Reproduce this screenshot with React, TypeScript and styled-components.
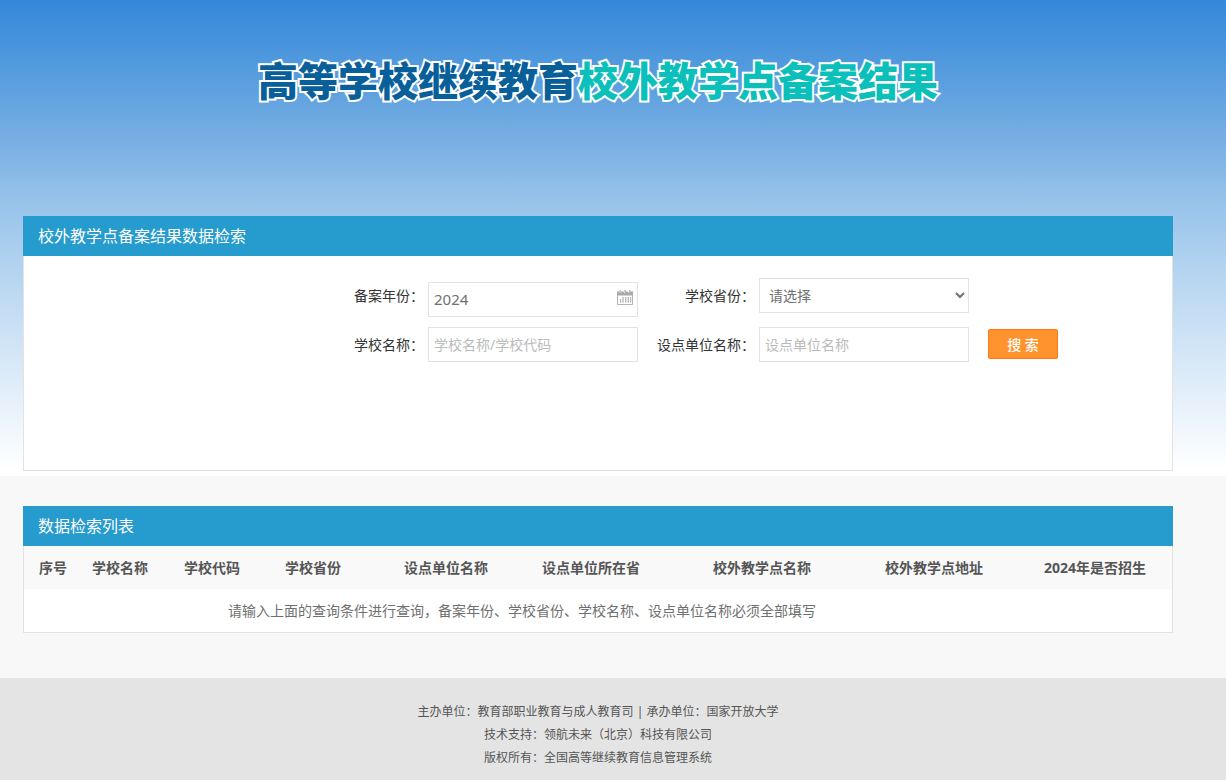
import React from "react";
import styled, { createGlobalStyle } from "styled-components";

const GlobalStyle = createGlobalStyle`
  * {
    box-sizing: border-box;
  }
  body {
    margin: 0;
    background: #f8f8f8;
    color: #333;
    font-family: "Noto Sans", "Noto Sans CJK SC", sans-serif;
    font-size: 14px;
  }
  input, select, button {
    font-family: inherit;
  }
`;

const Hero = styled.header`
  height: 476px;
  padding-right: 30px;
  background: linear-gradient(#3488da 0, #4693dc 40px, #6da9e1 120px, #96c2ea 200px, #b8d6f1 280px, #fff 470px);
`;

const Container = styled.div`
  max-width: 1150px;
  margin: 0 auto;
`;

const Title = styled.h1`
  height: 216px;
  margin: 0;
  padding-top: 50px;
  font-family: "Noto Sans CJK SC", sans-serif;
  font-size: 40px;
  font-weight: 900;
  line-height: 58px;
  text-align: center;
  color: #085f99;
  -webkit-text-stroke: 4px #fff;
  paint-order: stroke fill;
  stroke-linejoin: round;
`;

const TitleAccent = styled.span`
  color: #0bbfba;
`;

const PanelTitle = styled.h2`
  margin: 0;
  padding-left: 15px;
  background: #269bce;
  color: #fff;
  font-size: 16px;
  font-weight: 400;
  line-height: 40px;
`;

const PanelBody = styled.div<{ $height?: number }>`
  min-height: ${(p) => (p.$height ? `${p.$height}px` : "0")};
  background: #fff;
  border: 1px solid #e3e3e3;
  border-top: 0;
`;

const SearchForm = styled.form`
  display: grid;
  grid-template-columns: 70px 210px 113px 210px 70px;
  column-gap: 4px;
  row-gap: 10px;
  align-items: start;
  padding: 22px 0 0 330px;
`;

const Label = styled.label`
  line-height: 35px;
  text-align: right;
  white-space: nowrap;
`;

const Field = styled.input`
  width: 100%;
  height: 35px;
  padding: 0 5px;
  border: 1px solid #e3e3e3;
  background: #fff;
  color: #707070;
  font-size: 14px;
  &::placeholder {
    color: #bbb;
    opacity: 1;
  }
`;

const DateBox = styled.div`
  position: relative;
  padding-top: 4px;
`;

const DateField = styled(Field)`
  display: block;
  padding: 0 26px 2px 5px;
  font-size: 15px;
`;

const CalendarIcon = styled.svg`
  position: absolute;
  top: 12px;
  right: 5px;
`;

const Select = styled.select`
  width: 100%;
  height: 35px;
  padding: 0 5px;
  border: 1px solid #e3e3e3;
  border-radius: 0;
  background: #fff;
  color: #707070;
  font-size: 14px;
`;

const SearchButton = styled.button`
  grid-column: 5;
  width: 70px;
  height: 30px;
  margin: 2px 0 0 15px;
  padding: 2px 0 0;
  border: 1px solid #fb7818;
  border-radius: 2px;
  background: #ff942f;
  color: #fff;
  font-size: 14px;
  font-weight: 500;
  line-height: 26px;
`;

const ListSection = styled.main`
  padding: 30px 30px 45px 0;
`;

const Table = styled.table`
  width: 100%;
  table-layout: fixed;
  border-collapse: collapse;
  color: #555;
`;

const HeadCell = styled.th<{ $width: number }>`
  width: ${(p) => p.$width}px;
  height: 43px;
  padding: 0 0 0 15px;
  background: #f9f9f9;
  line-height: 20px;
  text-align: left;
  white-space: nowrap;
`;

const MessageCell = styled.td`
  height: 43px;
  padding: 0 0 0 204px;
  color: #707070;
  line-height: 20px;
`;

const Footer = styled.footer`
  padding: 22px 30px 11px 0;
  background: #e4e4e4;
  color: #555;
  font-size: 12px;
  text-align: center;
`;

const FooterLine = styled.p`
  margin: 0;
  line-height: 23px;
`;

const columns = [
  { name: "序号", width: 53 },
  { name: "学校名称", width: 92 },
  { name: "学校代码", width: 101 },
  { name: "学校省份", width: 119 },
  { name: "设点单位名称", width: 138 },
  { name: "设点单位所在省", width: 171 },
  { name: "校外教学点名称", width: 172 },
  { name: "校外教学点地址", width: 159 },
  { name: "2024年是否招生", width: 143 },
];

const footerLines = [
  "主办单位：教育部职业教育与成人教育司 | 承办单位：国家开放大学",
  "技术支持：领航未来（北京）科技有限公司",
  "版权所有：全国高等继续教育信息管理系统",
];

function Calendar() {
  return (
    <CalendarIcon width="16" height="16" viewBox="0 0 16 16" aria-hidden="true">
      <path fill="#aaa" d="M0 1.500h2.200l.8 1.500 1-1.500h2.500l1 1.500 1-1.500h2.500l1 1.500 1-1.500H16V5.500H0z" />
      <path fill="#aaa" d="M2.500 0h1.200v2H2.500zM7.400 0h1.200v2H7.400zM12.300 0h1.200v2h-1.200z" />
      <path fill="none" stroke="#b4b4b4" d="M.5 5v9.500h15V5" />
      <path fill="#b0b0b0" d="M3 9h1.200v3.500H3zM5.300 7h1.400v5.500H5.300zM8 7h1.400v5.500H8zM10.600 7H12v5.500h-1.400zM13 7h1.200v5.500H13z" />
      <path stroke="#fff" strokeOpacity=".5" strokeWidth=".6" d="M2 8.700h12M2 10.700h12" />
    </CalendarIcon>
  );
}

export default function App() {
  return (
    <>
      <GlobalStyle />
      <Hero>
        <Container>
          <Title>
            高等学校继续教育<TitleAccent>校外教学点备案结果</TitleAccent>
          </Title>
          <PanelTitle>校外教学点备案结果数据检索</PanelTitle>
          <PanelBody $height={215}>
            <SearchForm onSubmit={(e) => e.preventDefault()}>
              <Label htmlFor="year">备案年份：</Label>
              <DateBox>
                <DateField id="year" type="text" defaultValue="2024" />
                <Calendar />
              </DateBox>
              <Label htmlFor="province">学校省份：</Label>
              <Select id="province">
                <option>请选择</option>
              </Select>
              <span />
              <Label htmlFor="school">学校名称：</Label>
              <Field id="school" type="text" placeholder="学校名称/学校代码" />
              <Label htmlFor="unit">设点单位名称：</Label>
              <Field id="unit" type="text" placeholder="设点单位名称" />
              <SearchButton type="submit">搜 索</SearchButton>
            </SearchForm>
          </PanelBody>
        </Container>
      </Hero>
      <ListSection>
        <Container>
          <PanelTitle>数据检索列表</PanelTitle>
          <PanelBody>
            <Table>
              <thead>
                <tr>
                  {columns.map((c) => (
                    <HeadCell key={c.name} $width={c.width} scope="col">
                      {c.name}
                    </HeadCell>
                  ))}
                </tr>
              </thead>
              <tbody>
                <tr>
                  <MessageCell colSpan={columns.length}>
                    请输入上面的查询条件进行查询，备案年份、学校省份、学校名称、设点单位名称必须全部填写
                  </MessageCell>
                </tr>
              </tbody>
            </Table>
          </PanelBody>
        </Container>
      </ListSection>
      <Footer>
        {footerLines.map((line) => (
          <FooterLine key={line}>{line}</FooterLine>
        ))}
      </Footer>
    </>
  );
}
